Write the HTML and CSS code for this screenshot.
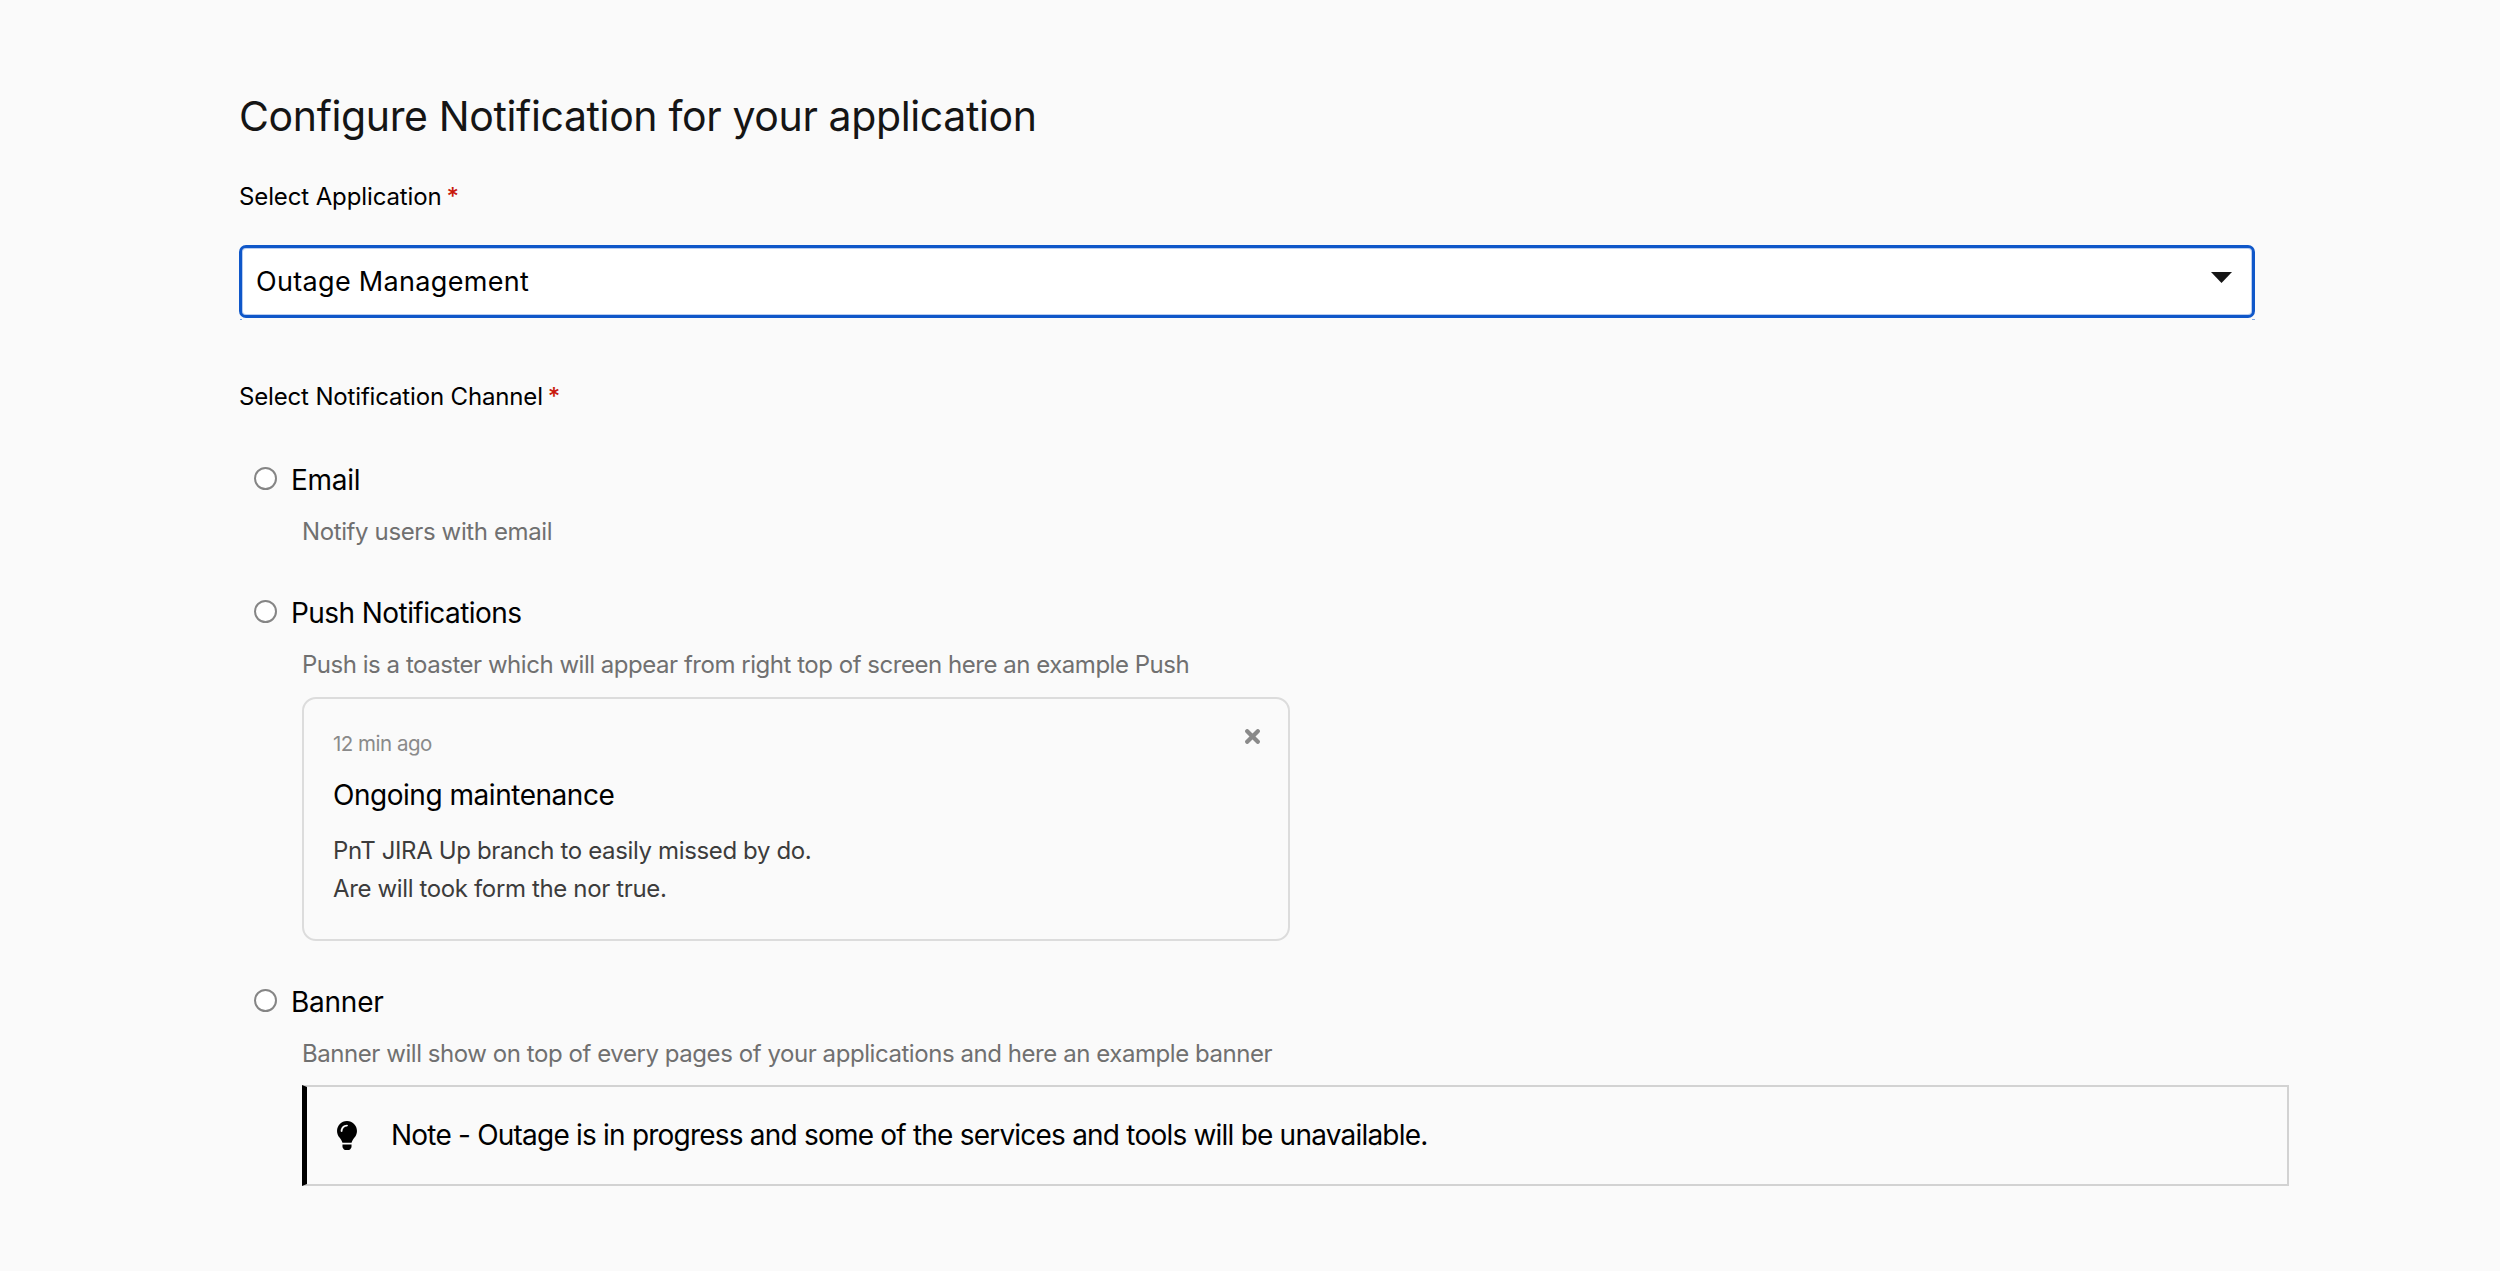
FILE: index.html
```html
<!DOCTYPE html>
<html lang="en">
<head>
<meta charset="utf-8">
<title>Configure Notification</title>
<link rel="stylesheet" href="styles.css">
</head>
<body>
<main class="page">
  <h1 class="title">Configure Notification for your application</h1>
  <div class="field-label"><span class="label-app">Select Application</span><span class="required">*</span></div>
  <div class="select" role="combobox" tabindex="0">
    <span class="select-value">Outage Management</span>
    <svg class="caret" viewBox="0 0 21 11"><path d="M0 0h21L10.5 11z"/></svg>
  </div>
  <div class="field-label channel-label"><span class="label-channel">Select Notification Channel</span><span class="required">*</span></div>

  <section class="option">
    <label class="option-head"><span class="radio"></span><span class="name-email">Email</span></label>
    <p class="hint hint-email">Notify users with email</p>
  </section>

  <section class="option option-push">
    <label class="option-head"><span class="radio"></span><span class="name-push">Push Notifications</span></label>
    <p class="hint hint-push">Push is a toaster which will appear from right top of screen here an example Push</p>
    <div class="toast">
      <div class="toast-body">
        <div class="toast-time">12 min ago</div>
        <div class="toast-title">Ongoing maintenance</div>
        <div class="toast-text">PnT JIRA Up branch to easily missed by do.<br>Are will took form the nor true.</div>
      </div>
      <svg class="close" viewBox="0 0 15 15"><path d="M2.2 2.2l10.6 10.6M12.8 2.2L2.2 12.8"/></svg>
    </div>
  </section>

  <section class="option option-banner">
    <label class="option-head"><span class="radio"></span><span class="name-banner">Banner</span></label>
    <p class="hint hint-banner">Banner will show on top of every pages of your applications and here an example banner</p>
    <div class="banner">
      <svg class="bulb" viewBox="0 0 352 512"><path d="M96.06 454.35c.01 6.29 1.87 12.45 5.36 17.69l17.09 25.69a31.99 31.99 0 0 0 26.64 14.28h61.71a31.99 31.99 0 0 0 26.64-14.28l17.09-25.69a31.989 31.989 0 0 0 5.36-17.69l.04-38.35H96.01l.05 38.35zM0 176c0 44.37 16.45 84.85 43.56 115.78 16.52 18.85 42.36 58.23 52.21 91.45.04.26.07.52.11.78h160.24c.04-.26.07-.51.11-.78 9.85-33.22 35.69-72.6 52.21-91.45C335.55 260.85 352 220.37 352 176 352 78.61 272.91-.3 175.45 0 73.44.31 0 82.97 0 176zm176-80c-44.11 0-80 35.89-80 80 0 8.84-7.16 16-16 16s-16-7.16-16-16c0-61.76 50.24-112 112-112 8.84 0 16 7.16 16 16s-7.16 16-16 16z"/></svg>
      <span class="note">Note - Outage is in progress and some of the services and tools will be unavailable.</span>
    </div>
  </section>
</main>
</body>
</html>
```
FILE: styles.css
```css
* { box-sizing: border-box; }
body {
  margin: 0;
  background: #fafafa;
  color: #000;
  font-family: Inter, "Liberation Sans", sans-serif;
}
.page { padding: 91px 211px 0 239px; height: 1271px; }
.title { margin: 0; font-size: 41px; line-height: 50px; font-weight: 400; letter-spacing: -0.37px; color: #151515; }
.field-label { display: flex; gap: 5px; margin-top: 38px; font-size: 24px; line-height: 36px; }
.label-app { letter-spacing: -0.12px; }
.label-channel { letter-spacing: -0.16px; }
.required { color: #c9190b; font-weight: 500; }
.select {
  position: relative;
  display: flex;
  align-items: center;
  justify-content: space-between;
  width: 2016px;
  height: 73px;
  margin-top: 30px;
  padding: 0 20px 0 14px;
  border: 3px solid #0f57c9;
  border-radius: 7px;
  background: #fff;
  box-shadow: inset 0 0 0 1px #b9cdf0;
  font-size: 27px;
}
.select::after {
  content: "";
  position: absolute;
  left: -2px;
  right: -3px;
  bottom: -5px;
  height: 1px;
  background: linear-gradient(90deg, #7fa6e0 2px, transparent 2px calc(100% - 3px), #7fa6e0 calc(100% - 3px));
}
.select-value { letter-spacing: 0.32px; }
.caret { width: 21px; height: 11px; margin-top: -8px; fill: #151515; }
.channel-label { margin-top: 61px; }
.option { margin-top: 45px; }
.option-push { margin-top: 43px; }
.option-banner { margin-top: 41px; }
.option-head { display: flex; align-items: center; gap: 14px; padding-left: 15px; font-size: 28px; line-height: 40px; }
.name-email, .name-banner { letter-spacing: -0.25px; }
.name-push { letter-spacing: -0.57px; }
.radio { width: 23px; height: 23px; margin-top: -4px; border: 2px solid #858585; border-radius: 50%; background: #fff; }
.hint { margin: 14px 0 0 63px; font-size: 24px; line-height: 36px; color: #707070; }
.hint-email { letter-spacing: -0.38px; }
.hint-push { letter-spacing: -0.47px; }
.hint-banner { letter-spacing: -0.44px; }
.toast {
  display: flex;
  justify-content: space-between;
  width: 988px;
  height: 244px;
  margin: 14px 0 0 63px;
  padding: 30px 28px 0 29px;
  border: 2px solid #dcdcdc;
  border-radius: 14px;
}
.toast-time { font-size: 20.5px; line-height: 30px; letter-spacing: -0.5px; color: #8a8a8a; }
.toast-title { margin-top: 16px; font-size: 28px; line-height: 40px; letter-spacing: -0.47px; }
.toast-text { margin-top: 17px; font-size: 24px; line-height: 37.6px; letter-spacing: -0.36px; color: #3c3c3c; }
.close { width: 15px; height: 15px; stroke: #8a8a8a; stroke-width: 4.2; stroke-linecap: round; fill: none; }
.banner {
  display: flex;
  align-items: center;
  gap: 34px;
  height: 101px;
  margin: 13px 0 0 63px;
  padding: 0 0 1px 30px;
  border: 2px solid #d2d2d2;
  border-left: 5px solid #000;
  font-size: 28px;
}
.note { letter-spacing: -0.79px; }
.bulb { width: 20px; height: 29px; }
```
